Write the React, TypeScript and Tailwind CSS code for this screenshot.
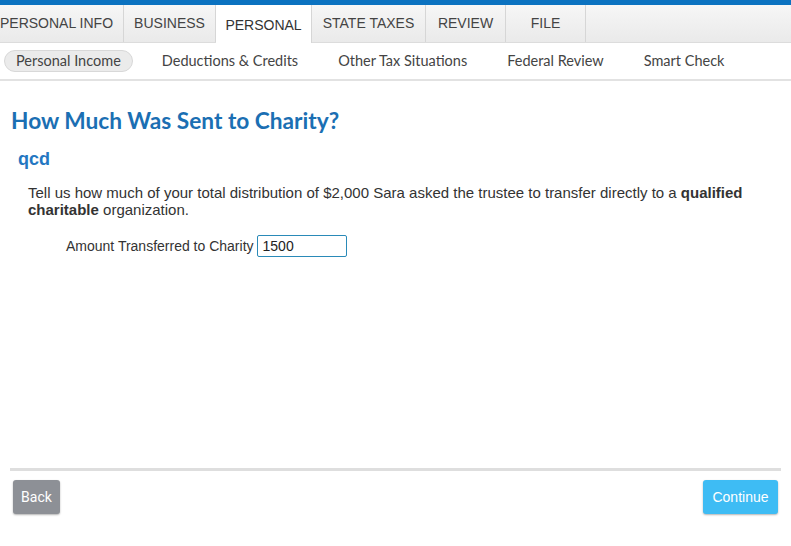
import React from "react";

const tabs = [
  { label: "PERSONAL INFO", w: 124, first: true },
  { label: "BUSINESS", w: 92 },
  { label: "PERSONAL", w: 96, active: true },
  { label: "STATE TAXES", w: 114 },
  { label: "REVIEW", w: 80 },
  { label: "FILE", w: 80 },
];

const subs = [
  { label: "Personal Income", active: true },
  { label: "Deductions & Credits" },
  { label: "Other Tax Situations" },
  { label: "Federal Review" },
  { label: "Smart Check" },
];

export default function App() {
  return (
    <div className="w-[791px] h-[546px] bg-white flex flex-col overflow-hidden" style={{ fontFamily: '"Liberation Sans", Arial, sans-serif' }}>
      <div className="h-[5px] bg-[#0b72c0]" />
      <div className="h-[38px] flex bg-gradient-to-b from-[#f6f6f6] to-[#eaeaea] border-b border-[#dcdcdc]">
        {tabs.map((t) => (
          <div
            key={t.label}
            style={{ width: t.w }}
            className={`flex items-center text-[14px] border-r border-[#d6d6d6] ${
              t.first ? "justify-start pl-0" : "justify-center"
            } ${t.active ? "bg-white text-[#333] h-[38px] pt-[2px]" : "text-[#444]"}`}
          >
            {t.label}
          </div>
        ))}
      </div>
      <div className="h-[38px] flex items-center border-b-2 border-[#e2e2e2] pl-[4px]" style={{ fontFamily: 'Lato, "Open Sans", sans-serif' }}>
        {subs.map((s) => (
          <div
            key={s.label}
            className={`text-[14.5px] text-[#444] ${
              s.active
                ? "bg-[#ebebeb] border border-[#d8d8d8] rounded-full px-[11px] h-[22px] flex items-center mr-[29px]"
                : "mr-[40px]"
            }`}
          >
            {s.label}
          </div>
        ))}
      </div>
      <div className="flex-1 flex flex-col">
        <h1 className="text-[#1b6fb3] text-[22.7px] font-bold ml-[11px] mt-[26px] leading-[28px]" style={{ fontFamily: 'Lato, "Open Sans", sans-serif' }}>
          How Much Was Sent to Charity?
        </h1>
        <h2 className="text-[#2477c2] text-[18px] font-bold ml-[18px] mt-[13px] leading-[22px]">qcd</h2>
        <p className="text-[#333] text-[15px] leading-[17px] ml-[28px] mr-[40px] mt-[14px]">
          Tell us how much of your total distribution of $2,000 Sara asked the trustee to transfer directly to a <b>qualified charitable</b> organization.
        </p>
        <div className="flex items-center ml-[66px] mt-[17px]">
          <span className="text-[14px] text-[#333]">Amount Transferred to Charity</span>
          <div className="ml-[3px] w-[90px] h-[22px] border border-[#2a8ab8] rounded-[2px] text-[14px] text-[#222] pl-[5px] flex items-center">
            1500
          </div>
        </div>
        <div className="flex-1" />
        <div className="mx-[10px] h-[3px] bg-[#dedede]" />
        <div className="flex justify-between items-start mx-[13px] mt-[9px] mb-[32px]" style={{ fontFamily: 'Roboto, "Liberation Sans", sans-serif' }}>
          <button className="h-[34px] w-[47px] bg-[#8d9096] text-white text-[14px] rounded-[3px] shadow-[0_1px_2px_rgba(0,0,0,0.3)]">Back</button>
          <button className="h-[34px] w-[75px] bg-[#3ebcf4] text-white text-[14px] rounded-[3px] shadow-[0_1px_2px_rgba(0,0,0,0.3)]" style={{ fontFamily: '"Liberation Sans", Arial, sans-serif' }}>Continue</button>
        </div>
      </div>
    </div>
  );
}
